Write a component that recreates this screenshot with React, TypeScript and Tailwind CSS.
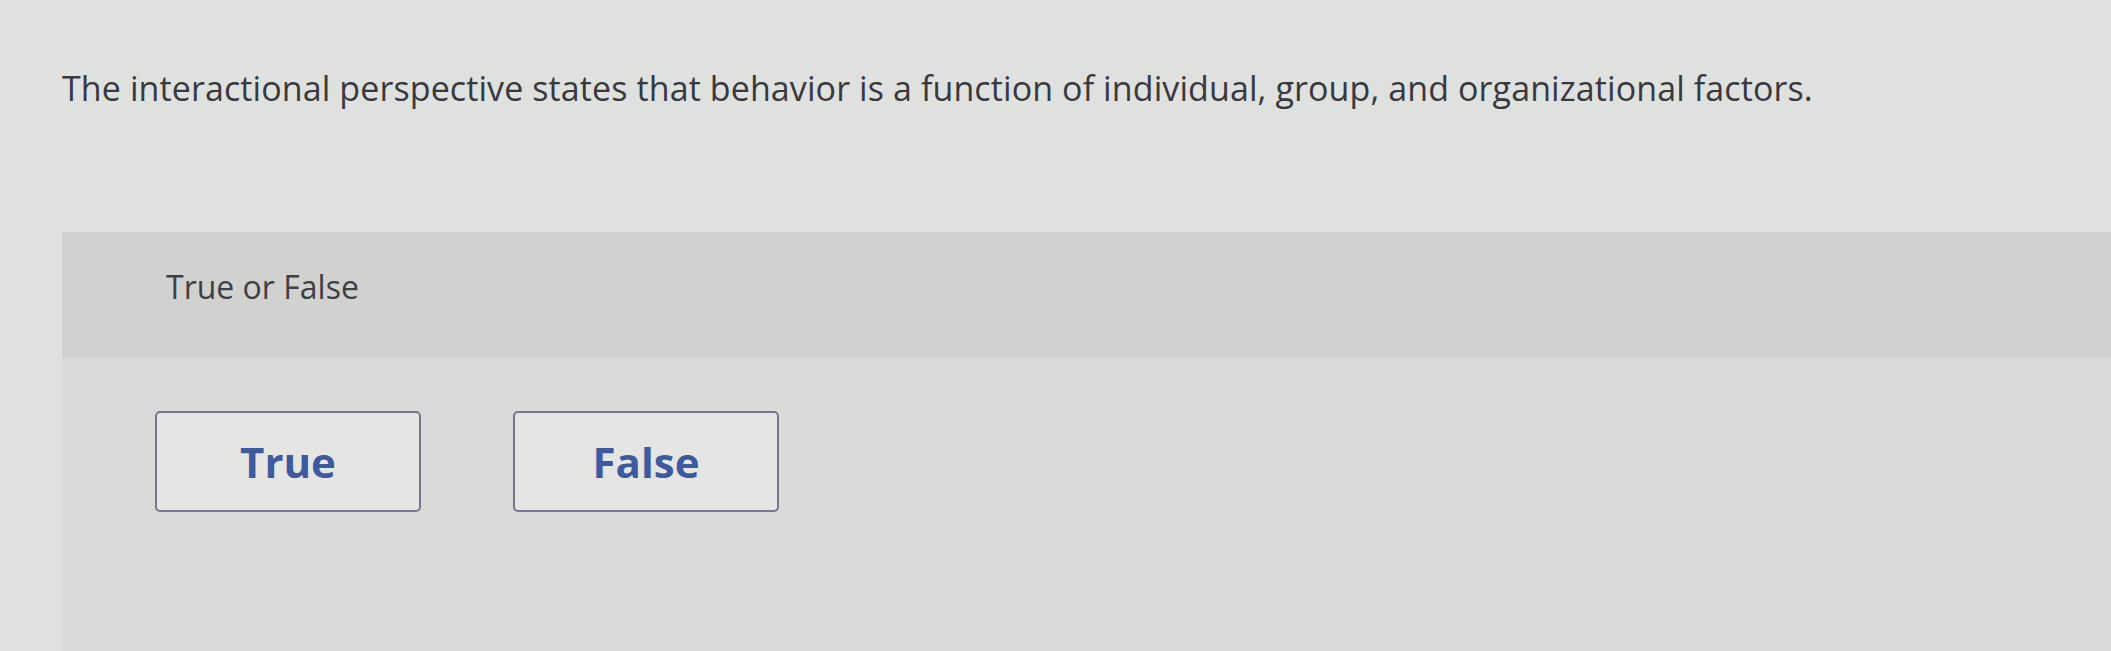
const choices = ["True", "False"];

function ChoiceButton({ label }: { label: string }) {
  return (
    <button
      type="button"
      className="flex h-[101px] w-[266px] items-center justify-center rounded-[5px] border-2 border-[#74778f] bg-[#e5e6e4] text-[42px] font-bold text-[#3d5a9f]"
    >
      {label}
    </button>
  );
}

export default function App() {
  return (
    <div
      className="h-[651px] w-full overflow-hidden bg-[#dfe1de] pl-[62px]"
      style={{ fontFamily: "'Open Sans', Lato, sans-serif" }}
    >
      <p className="pt-[66px] text-[34px] leading-[44px] tracking-[0.1px] text-[#38383f]">
        The interactional perspective states that behavior is a function of
        individual, group, and organizational factors.
      </p>

      <section className="mt-[122px] h-full">
        {/* prompt header */}
        <div className="flex h-[125px] items-center bg-[#d1d2d0] pb-[16px] pl-[104px]">
          <span className="text-[32px] text-[#3f3f46]">True or False</span>
        </div>

        {/* answer choices */}
        <div className="flex h-full gap-[92px] bg-[#dadbd9] pl-[93px] pt-[54px]">
          {choices.map((c) => (
            <ChoiceButton key={c} label={c} />
          ))}
        </div>
      </section>
    </div>
  );
}
